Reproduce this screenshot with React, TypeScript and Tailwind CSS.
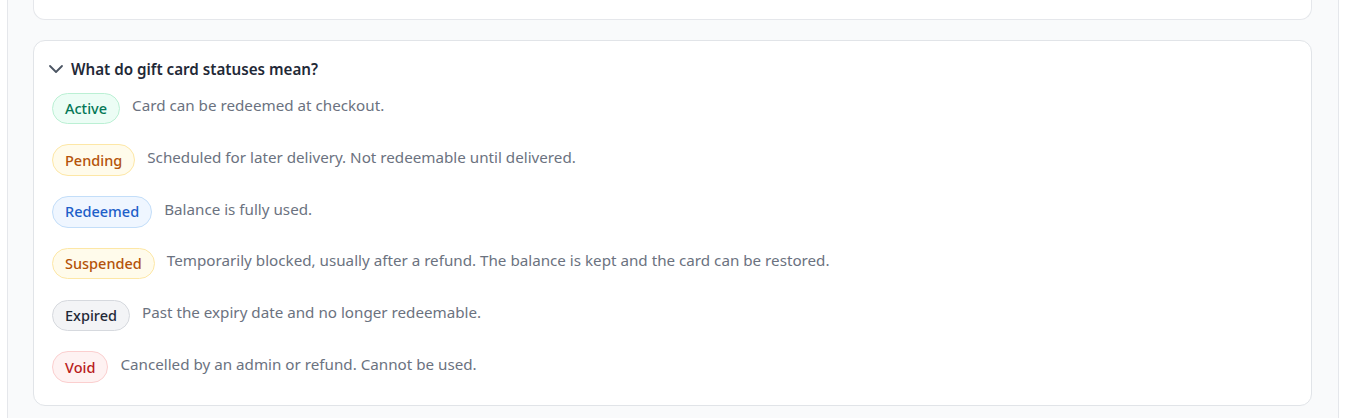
import { ChevronDown } from "lucide-react";

const statuses = [
  {
    label: "Active",
    cls: "bg-[#ecfdf5] border-[#bbf0d4] text-[#047857]",
    text: "Card can be redeemed at checkout.",
  },
  {
    label: "Pending",
    cls: "bg-[#fffbeb] border-[#fde7a6] text-[#b45309]",
    text: "Scheduled for later delivery. Not redeemable until delivered.",
  },
  {
    label: "Redeemed",
    cls: "bg-[#eff6ff] border-[#c3def9] text-[#1d5fc9]",
    text: "Balance is fully used.",
  },
  {
    label: "Suspended",
    cls: "bg-[#fffbeb] border-[#fde7a6] text-[#b45309]",
    text: "Temporarily blocked, usually after a refund. The balance is kept and the card can be restored.",
  },
  {
    label: "Expired",
    cls: "bg-[#f3f4f6] border-[#d6d9de] text-[#1f2937]",
    text: "Past the expiry date and no longer redeemable.",
  },
  {
    label: "Void",
    cls: "bg-[#fef2f2] border-[#fbcfcf] text-[#b91c1c]",
    text: "Cancelled by an admin or refund. Cannot be used.",
  },
];

export default function App() {
  return (
    <div
      className="bg-white h-[419px] overflow-hidden pl-[7px] pr-[9px]"
      style={{ fontFamily: '"Noto Sans", "Open Sans", sans-serif' }}
    >
      <div className="h-full bg-[#f9fafb] border-x border-[#e5e7eb] pl-[25px] pr-[26px] flex flex-col gap-[20px] -mt-[1px]">
        {/* previous card (cut off) */}
        <div className="h-[20px] -mt-[20px] box-content pt-[20px] bg-white border border-t-0 border-[#e5e7eb] rounded-b-xl" />

        <div className="bg-white border border-[#e1e4e8] rounded-xl pl-[18px] pr-6 pt-[16px] pb-[22px]">
          <div className="flex items-center h-[24px]">
            <ChevronDown className="w-6 h-6 text-[#4b5563] -ml-[8px]" strokeWidth={1.8} />
            <span className="ml-[3px] text-[15.2px] font-semibold text-[#1f2937] leading-5">
              What do gift card statuses mean?
            </span>
          </div>
          <div className="mt-[11.5px] flex flex-col gap-[20.2px]">
            {statuses.map((s) => (
              <div key={s.label} className="flex items-start gap-3">
                <span
                  className={`inline-flex items-center shrink-0 h-[31.6px] px-3 rounded-full border text-[14.5px] font-medium pt-[1px] ${s.cls}`}
                >
                  {s.label}
                </span>
                <span className="text-[15.2px] leading-[22px] text-[#6b7280] pt-[1.5px]">{s.text}</span>
              </div>
            ))}
          </div>
        </div>
      </div>
    </div>
  );
}
